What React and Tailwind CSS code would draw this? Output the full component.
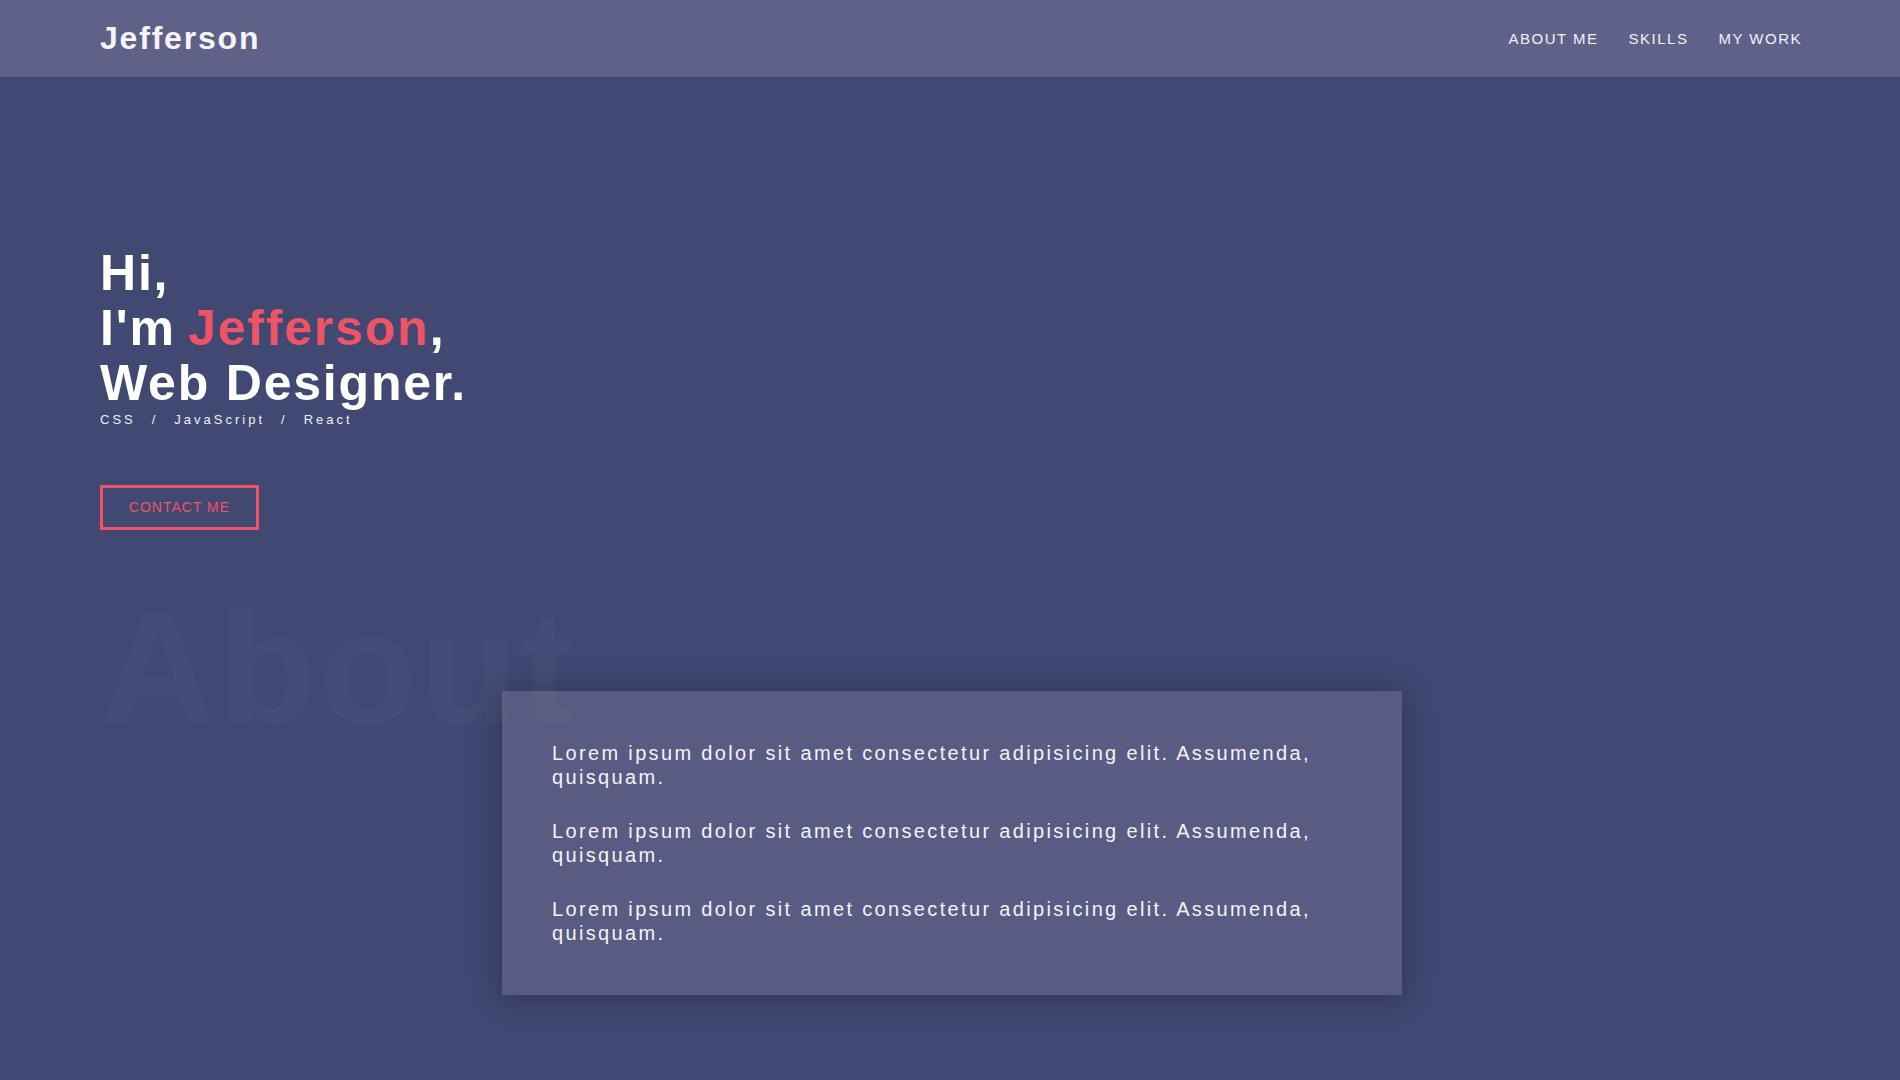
export default function App() {
    const skills = ["CSS", "JavaScript", "React"]
    const paragraphs = [1, 2, 3]

    return (
        <div className="min-h-screen bg-[#414872] font-['Liberation_Sans',Arial,sans-serif] text-white">
            <header className="flex h-[77px] items-center justify-between bg-[#5f6189] pl-[100px] pr-[98px]">
                <h1 className="pb-[1px] text-[32px] font-bold tracking-[1.8px] text-[#f6f3fd]">Jefferson</h1>
                <nav className="flex gap-[30px] pt-[1px] text-[15px] tracking-[1.5px] text-[#f1f0f8]">
                    <a>ABOUT ME</a>
                    <a>SKILLS</a>
                    <a>MY WORK</a>
                </nav>
            </header>

            <main className="px-[100px]">
                <section className="pt-[169px]">
                    <h2 className="text-[50px] font-bold leading-[55px] tracking-[1.8px]">
                        Hi,
                        <br />
                        I'm <span className="-ml-[3px] text-[#ef5366]">Jefferson</span>,
                        <br />
                        Web Designer.
                    </h2>
                    <p className="flex text-[13px] leading-[18px] tracking-[3px] text-[#eef0f8]">
                        {skills.map((s, i) => (
                            <span key={s} className="flex">
                                {i > 0 && <span className="mx-[16px]">/</span>}
                                {s}
                            </span>
                        ))}
                    </p>
                    <button className="mt-[56px] flex h-[45px] w-[159px] items-center justify-center border-[3px] border-[#ef5366] text-[14px] tracking-[1px] text-[#ef5366]">
                        CONTACT ME
                    </button>
                </section>

                <section className="relative mt-[58px] pb-[87px] pt-[103px]">
                    <h2 className="pointer-events-none absolute left-0 top-0 z-10 text-[160px] font-bold leading-none tracking-[3px] text-white/[0.025]">
                        About
                    </h2>
                    <div className="mx-auto flex w-[900px] translate-x-[2px] flex-col gap-[30px] bg-[#595b82] p-[50px] shadow-[0_2px_30px_rgba(0,0,0,0.3)]">
                        {paragraphs.map((n) => (
                            <p key={n} className="text-[20px] leading-[24px] tracking-[2.35px] text-[#f3f2fa]">
                                Lorem ipsum dolor sit amet consectetur adipisicing elit. Assumenda, quisquam.
                            </p>
                        ))}
                    </div>
                </section>
            </main>
        </div>
    )
}
